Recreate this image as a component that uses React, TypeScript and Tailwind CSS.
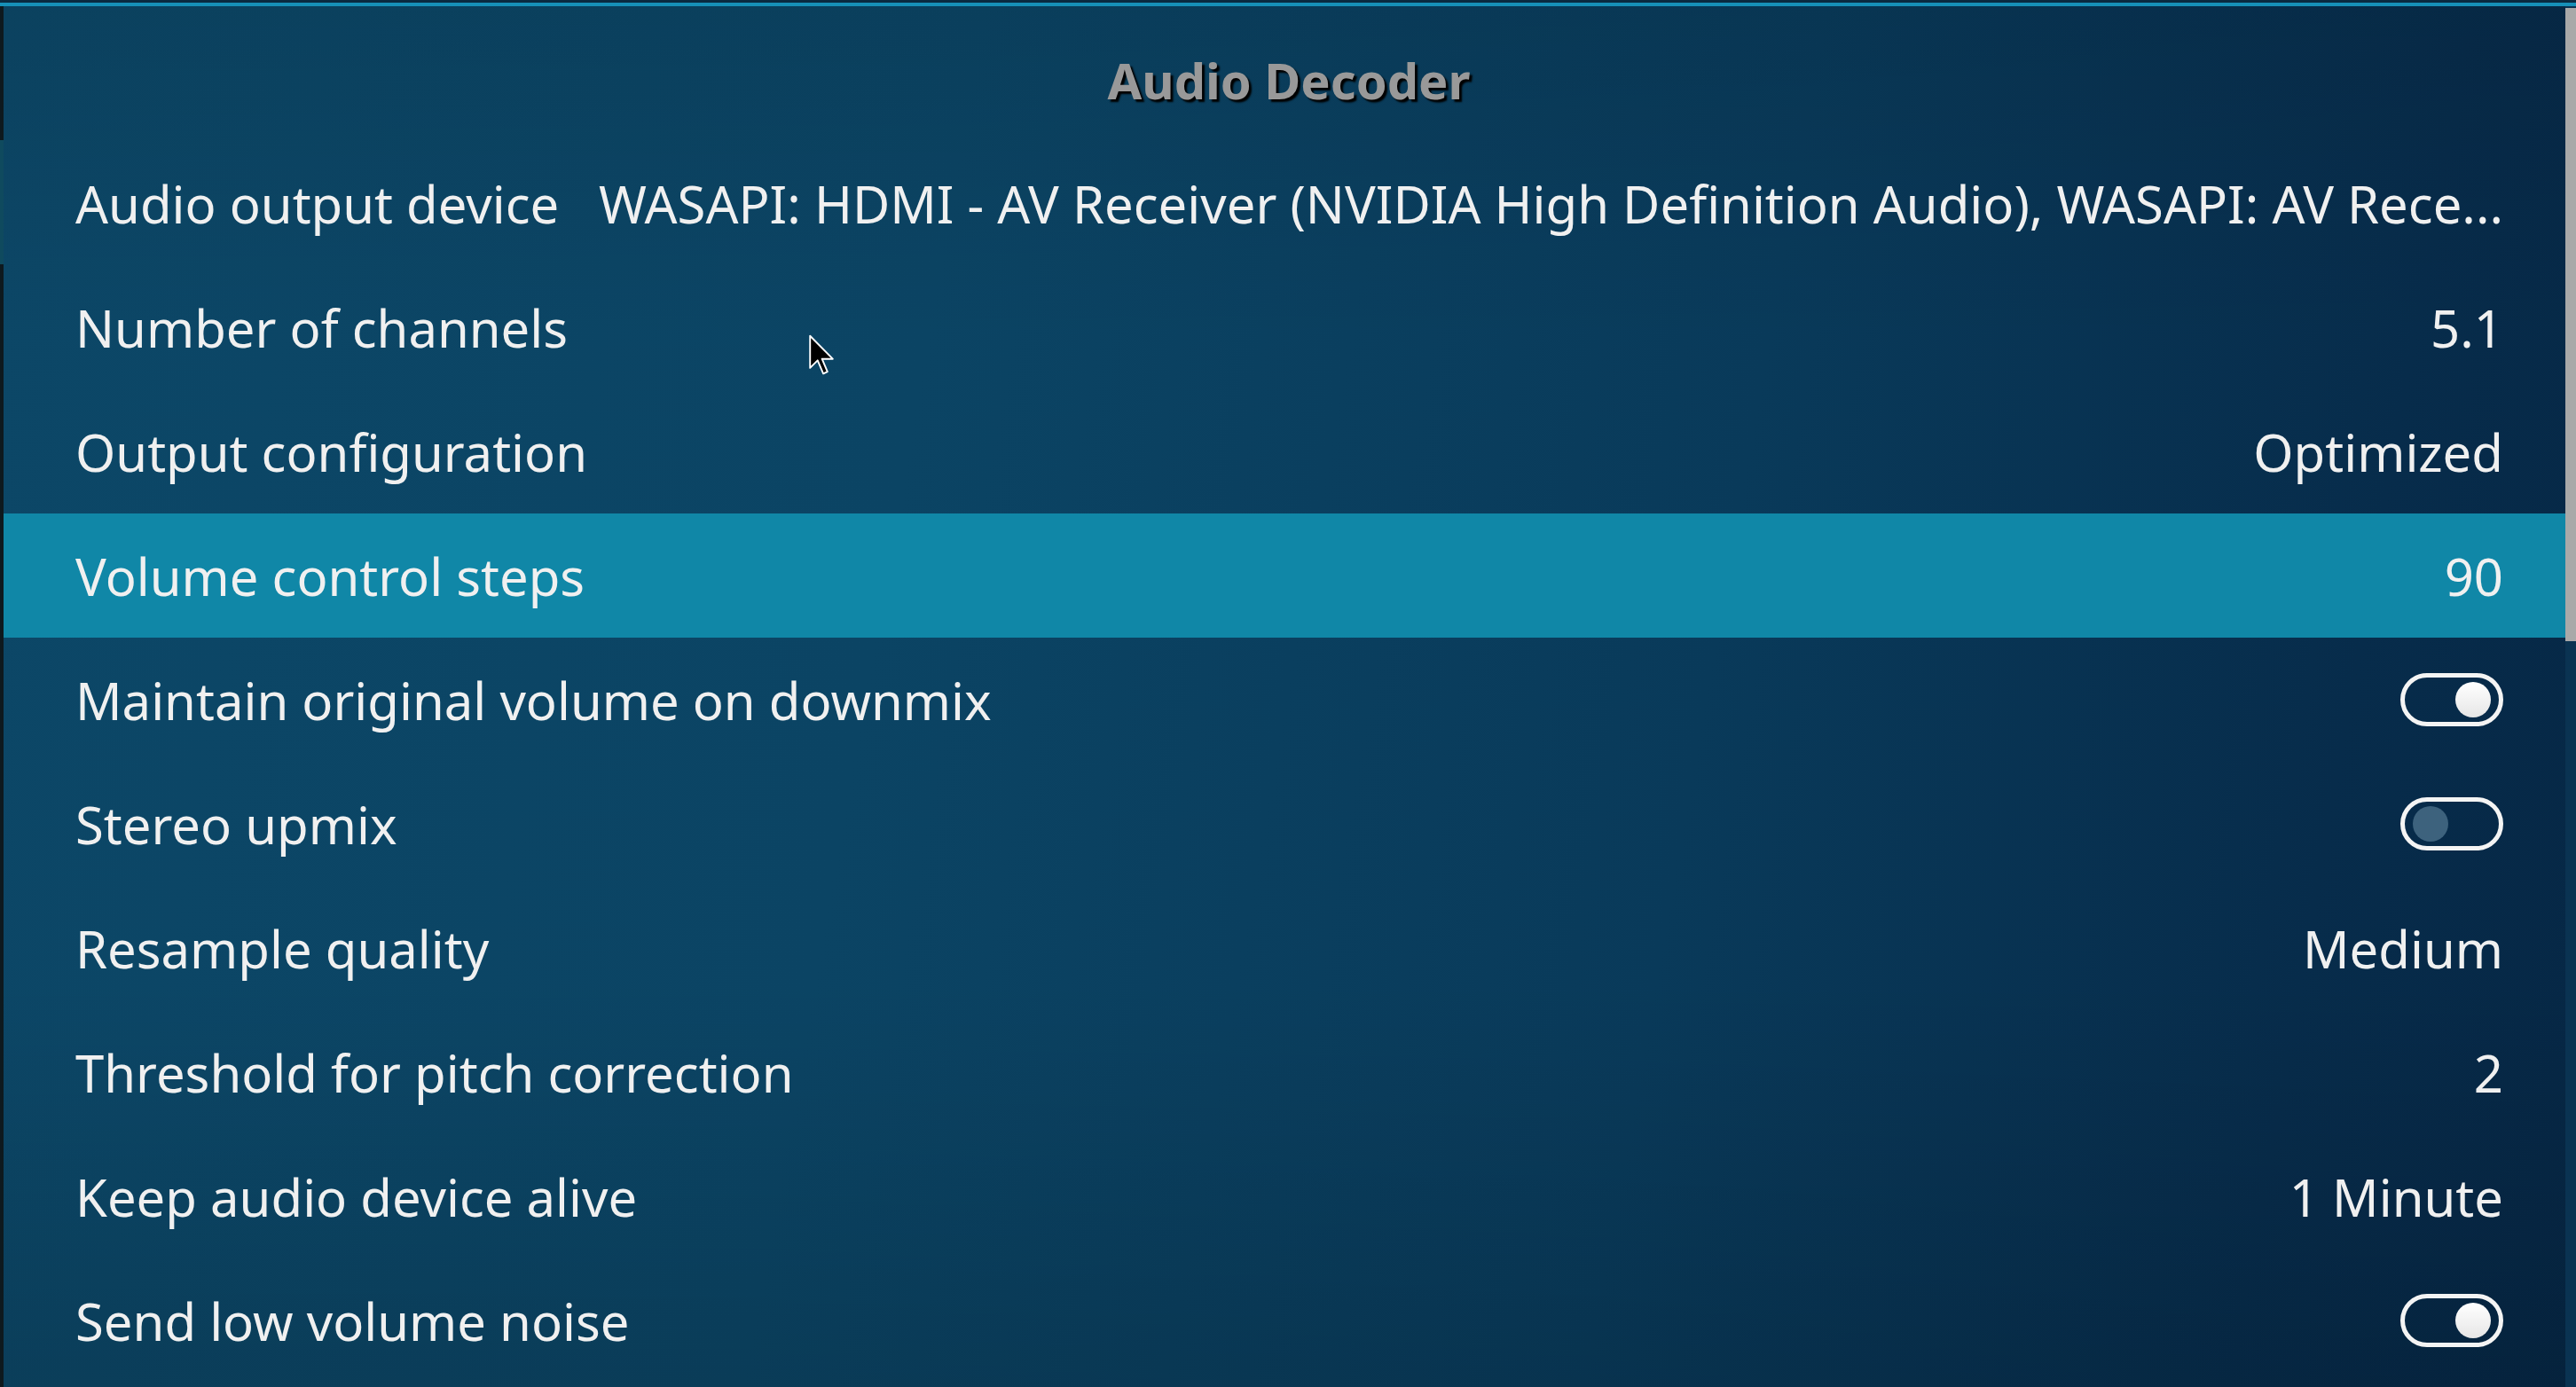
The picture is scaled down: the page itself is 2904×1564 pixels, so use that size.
import React from "react";

type Row = { label: string; value?: string; toggle?: boolean; selected?: boolean };

const rows: Row[] = [
  {
    label: "Audio output device",
    value: "WASAPI: HDMI - AV Receiver (NVIDIA High Definition Audio), WASAPI: AV Rece...",
  },
  { label: "Number of channels", value: "5.1" },
  { label: "Output configuration", value: "Optimized" },
  { label: "Volume control steps", value: "90", selected: true },
  { label: "Maintain original volume on downmix", toggle: true },
  { label: "Stereo upmix", toggle: false },
  { label: "Resample quality", value: "Medium" },
  { label: "Threshold for pitch correction", value: "2" },
  { label: "Keep audio device alive", value: "1 Minute" },
  { label: "Send low volume noise", toggle: true },
];

function Toggle({ on }: { on: boolean }) {
  return (
    <div className="w-[116px] h-[60px] rounded-full border-[5px] border-[#f4f4f4] flex items-center px-[9px] shrink-0">
      {on ? (
        <div className="ml-auto w-[40px] h-[40px] rounded-full bg-[linear-gradient(180deg,#ffffff,#e6e6e6)]" />
      ) : (
        <div className="w-[40px] h-[40px] rounded-full bg-[#3d627d]" />
      )}
    </div>
  );
}

function Cursor() {
  return (
    <svg
      className="absolute left-[911px] top-[377px]"
      width="30"
      height="46"
      viewBox="-0.8 -0.8 13.6 21.6"
    >
      <path
        d="M0 0 V17 L4 13 L7 20 L9.2 19 L6.3 12.2 H12 Z"
        fill="#000"
        stroke="#fff"
        strokeWidth="0.9"
        strokeLinejoin="round"
      />
    </svg>
  );
}

export default function App() {
  return (
    <div className="relative w-[2904px] h-[1564px] overflow-hidden bg-[#0a3352] font-['Noto_Sans',sans-serif] flex flex-col">
      <div className="h-[3px] bg-[#0a2a40] shrink-0" />
      <div className="h-[4px] bg-[#1690b8] shrink-0" />
      <div className="flex flex-1 min-h-0">
        {/* left edge */}
        <div className="w-[4px] flex flex-col shrink-0">
          <div className="h-[151px] bg-[#0e191e]" />
          <div className="h-[140px] bg-[#0f4a5e]" />
          <div className="flex-1 bg-[#0e191e]" />
        </div>
        {/* panel */}
        <div className="flex-1 min-w-0 flex flex-col bg-[linear-gradient(180deg,rgba(0,0,0,0.08)_0%,rgba(0,0,0,0)_25%,rgba(0,0,0,0)_70%,rgba(0,0,0,0.12)_100%),linear-gradient(100deg,#0c4767_0%,#0b4464_35%,#093a5a_65%,#072c4b_88%,#062745_100%)]">
          <div className="h-[152px] shrink-0 flex items-center justify-center pt-[14px] pl-[10px]">
            <span className="text-[56px] font-bold text-[#999999] [text-shadow:3px_3px_2px_#000]">
              Audio Decoder
            </span>
          </div>
          {rows.map((r, i) => (
            <div
              key={i}
              className={
                "h-[140px] shrink-0 flex items-center pl-[81px] pr-[70px] gap-[36px] text-[#f0f0f0] text-[58px] " +
                (r.selected ? "bg-[#1087a7]" : "")
              }
            >
              <span className="shrink-0 whitespace-nowrap">{r.label}</span>
              <div className="flex-1 min-w-0 flex justify-end">
                {r.toggle !== undefined ? (
                  <Toggle on={r.toggle} />
                ) : (
                  <span className="whitespace-nowrap shrink-0">{r.value}</span>
                )}
              </div>
            </div>
          ))}
        </div>
        {/* scrollbar */}
        <div className="w-[12px] shrink-0 pt-[2px]">
          <div className="h-[714px] bg-[#a9a9a9]" />
        </div>
      </div>
      <Cursor />
    </div>
  );
}
